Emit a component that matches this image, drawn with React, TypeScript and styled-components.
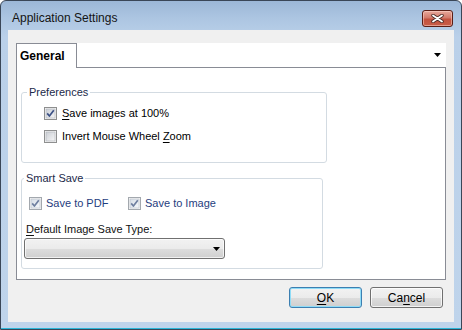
import React from "react";
import styled, { createGlobalStyle, css } from "styled-components";

const GlobalStyle = createGlobalStyle`
  html, body { margin: 0; padding: 0; background: #ffffff; }
  body { font-family: "Liberation Sans", Arial, sans-serif; font-size: 11px; }
  * { box-sizing: border-box; }
`;

const Window = styled.div`
  width: 462px;
  height: 330px;
  border: 1px solid #3a4657;
  border-radius: 6px 6px 0 0;
  background: linear-gradient(to bottom, #9cb7d7 0px, #adc6e2 18px, #bad0e9 36px, #bfd4eb 100%);
  box-shadow: inset 0 -1px 0 #2bb6d8;
  display: flex;
  flex-direction: column;
  overflow: hidden;
`;

const TitleBar = styled.div`
  height: 29px;
  flex: none;
  display: flex;
  justify-content: space-between;
  align-items: flex-start;
  padding: 0 8px 0 11px;
`;

const Title = styled.span`
  margin-top: 10px;
  font-size: 12px;
  line-height: 14px;
  color: #141414;
`;

const CloseButton = styled.div`
  margin-top: 9px;
  width: 31px;
  height: 17px;
  border: 1px solid #5a1e16;
  border-radius: 3px;
  background: linear-gradient(to bottom, #e9a99c 0%, #d27a6b 45%, #c3523f 55%, #c85d47 100%);
  box-shadow: inset 0 0 0 1px rgba(255, 220, 210, 0.5);
  display: flex;
  align-items: center;
  justify-content: center;
`;

const Client = styled.div`
  flex: 1;
  margin: 0 7px 7px 7px;
  background: #f0f0f0;
  padding: 13px 8px 0 8px;
  display: flex;
  flex-direction: column;
`;

const TabControl = styled.div`
  height: 237px;
  display: flex;
  flex-direction: column;
`;

const TabHeader = styled.div`
  height: 25px;
  display: flex;
  background: #ffffff;
`;

const Tab = styled.div`
  width: 61px;
  border: 1px solid #898c95;
  border-bottom: none;
  padding: 5px 0 0 3px;
  font-size: 12px;
  font-weight: bold;
  line-height: 14px;
  color: #000;
`;

const TabFiller = styled.div`
  flex: 1;
  border-bottom: 1px solid #898c95;
  display: flex;
  align-items: center;
  justify-content: flex-end;
  padding-right: 5px;
`;

const Panel = styled.div`
  flex: 1;
  background: #ffffff;
  border: 1px solid #898c95;
  border-top: none;
  padding-left: 4px;
  display: flex;
  flex-direction: column;
`;

const Group = styled.fieldset<{ $width: number; $top: number }>`
  width: ${(p) => p.$width}px;
  margin: ${(p) => p.$top}px 0 0 0;
  padding: 0;
  border: 1px solid #d3dbe2;
  border-radius: 3px;
  min-width: 0;
`;

const Legend = styled.legend<{ $indent: number }>`
  margin-left: ${(p) => p.$indent}px;
  padding: 0 2px;
  font-size: 11px;
  line-height: 13px;
  color: #1c2a4a;
`;

const PrefBody = styled.div`
  padding: 6px 0 17px 22px;
  display: flex;
  flex-direction: column;
  gap: 6px;
`;

const SmartBody = styled.div`
  padding: 10px 0 9px 0;
  display: flex;
  flex-direction: column;
`;

const CheckRow = styled.div<{ $indent?: number }>`
  display: flex;
  align-items: center;
  padding-left: ${(p) => p.$indent ?? 0}px;
`;

const CheckItem = styled.label<{ $width?: number; $gap: number; $blue?: boolean }>`
  display: flex;
  align-items: center;
  height: 17px;
  gap: ${(p) => p.$gap}px;
  ${(p) => (p.$width ? css`width: ${p.$width}px;` : "")}
  font-size: 11px;
  line-height: 13px;
  color: ${(p) => (p.$blue ? "#1f3d7e" : "#000000")};
  white-space: nowrap;
`;

const FieldLabel = styled.div`
  margin: 11px 0 0 4px;
  font-size: 11px;
  line-height: 13px;
  color: #111111;
`;

const Combo = styled.div`
  margin: 2px 0 0 2px;
  width: 201px;
  height: 21px;
  border: 1px solid #707070;
  border-radius: 3px;
  background: linear-gradient(to bottom, #f2f2f2 0%, #ebebeb 50%, #dddddd 51%, #cfcfcf 100%);
  box-shadow: inset 0 0 0 1px rgba(255, 255, 255, 0.7);
  display: flex;
  align-items: center;
  justify-content: flex-end;
  padding-right: 4px;
`;

const ButtonRow = styled.div`
  margin-top: 7px;
  display: flex;
  justify-content: flex-end;
  gap: 8px;
  padding-right: 3px;
`;

const Button = styled.div<{ $default?: boolean }>`
  width: 73px;
  height: 21px;
  border: 1px solid ${(p) => (p.$default ? "#3c7fb1" : "#707070")};
  border-radius: 3px;
  background: linear-gradient(to bottom, #f2f2f2 0%, #ebebeb 50%, #dddddd 51%, #cfcfcf 100%);
  box-shadow: inset 0 0 0 1px ${(p) => (p.$default ? "#8fdcf7" : "rgba(255,255,255,0.75)")};
  display: flex;
  align-items: center;
  justify-content: center;
  font-size: 12px;
  line-height: 14px;
  color: #000;
`;

const Key = styled.span`
  text-decoration: underline;
  text-underline-offset: 2px;
`;

function CheckBox({ faded }: { faded?: boolean }) {
  const id = faded ? "cbf" : "cbn";
  return (
    <svg width="13" height="13" viewBox="0 0 13 13" style={{ flex: "none" }}>
      <defs>
        <linearGradient id={id} x1="0" y1="0" x2="1" y2="1">
          <stop offset="0" stopColor={faded ? "#d6dde6" : "#c9ced6"} />
          <stop offset="1" stopColor={faded ? "#f7f9fb" : "#f6f6f6"} />
        </linearGradient>
      </defs>
      <rect x="0.5" y="0.5" width="12" height="12" fill="#f4f4f4" stroke={faded ? "#a3a8ae" : "#8e8f8f"} />
      <rect x="2" y="2" width="9" height="9" fill={`url(#${id})`} stroke={faded ? "#b8c0c9" : "#aeb3b9"} strokeWidth="0.6" />
      <path d="M3.2 6.4 L5.4 9 L9.8 3.2" fill="none" stroke={faded ? "#6f7fa0" : "#3d5286"} strokeWidth="1.7" strokeLinejoin="round" />
    </svg>
  );
}

function EmptyBox() {
  return (
    <svg width="13" height="13" viewBox="0 0 13 13" style={{ flex: "none" }}>
      <defs>
        <linearGradient id="cbe" x1="0" y1="0" x2="1" y2="1">
          <stop offset="0" stopColor="#cbcfd5" />
          <stop offset="1" stopColor="#f6f6f6" />
        </linearGradient>
      </defs>
      <rect x="0.5" y="0.5" width="12" height="12" fill="#f4f4f4" stroke="#8e8f8f" />
      <rect x="2" y="2" width="9" height="9" fill="url(#cbe)" stroke="#aeb3b9" strokeWidth="0.6" />
    </svg>
  );
}

function DownArrow() {
  return (
    <svg width="7" height="4" viewBox="0 0 7 4">
      <path d="M0 0 H7 L3.5 4 Z" fill="#000" />
    </svg>
  );
}

export default function App() {
  return (
    <>
      <GlobalStyle />
      <Window>
        <TitleBar>
          <Title>Application Settings</Title>
          <CloseButton>
            <svg width="13" height="9" viewBox="0 0 13 9">
              <path d="M2 1.5 L11 7.5 M11 1.5 L2 7.5" stroke="#4b2a25" strokeWidth="3.4" strokeLinecap="round" />
              <path d="M2 1.5 L11 7.5 M11 1.5 L2 7.5" stroke="#ffffff" strokeWidth="1.8" strokeLinecap="round" />
            </svg>
          </CloseButton>
        </TitleBar>
        <Client>
          <TabControl>
            <TabHeader>
              <Tab>General</Tab>
              <TabFiller>
                <DownArrow />
              </TabFiller>
            </TabHeader>
            <Panel>
              <Group $width={306} $top={18}>
                <Legend $indent={5}>Preferences</Legend>
                <PrefBody>
                  <CheckItem $gap={5}>
                    <CheckBox />
                    <span>
                      <Key>S</Key>ave images at 100%
                    </span>
                  </CheckItem>
                  <CheckItem $gap={5}>
                    <EmptyBox />
                    <span>
                      Invert Mouse Wheel <Key>Z</Key>oom
                    </span>
                  </CheckItem>
                </PrefBody>
              </Group>
              <Group $width={302} $top={9}>
                <Legend $indent={2}>Smart Save</Legend>
                <SmartBody>
                  <CheckRow $indent={7}>
                    <CheckItem $gap={4} $width={99} $blue>
                      <CheckBox faded />
                      <span>Save to PDF</span>
                    </CheckItem>
                    <CheckItem $gap={4} $blue>
                      <CheckBox faded />
                      <span>Save to Image</span>
                    </CheckItem>
                  </CheckRow>
                  <FieldLabel>
                    <Key>D</Key>efault Image Save Type:
                  </FieldLabel>
                  <Combo>
                    <DownArrow />
                  </Combo>
                </SmartBody>
              </Group>
            </Panel>
          </TabControl>
          <ButtonRow>
            <Button $default>
              <span>
                <Key>O</Key>K
              </span>
            </Button>
            <Button>
              <span>
                Ca<Key>n</Key>cel
              </span>
            </Button>
          </ButtonRow>
        </Client>
      </Window>
    </>
  );
}
